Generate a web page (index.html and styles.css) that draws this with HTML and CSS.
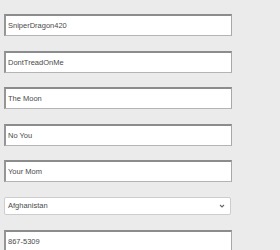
FILE: index.html
```html
<!DOCTYPE html>
<html>
<head>
<meta charset="utf-8">
<link rel="stylesheet" href="styles.css">
</head>
<body>
<form class="form">
  <input class="field" type="text" value="SniperDragon420">
  <input class="field" type="text" value="DontTreadOnMe">
  <input class="field" type="text" value="The Moon">
  <input class="field" type="text" value="No You">
  <input class="field" type="text" value="Your Mom">
  <div class="select">
    <span class="select-text">Afghanistan</span>
    <svg class="chev" width="6" height="4" viewBox="0 0 6 4"><path d="M1 1 L3 3 L5 1" fill="none" stroke="#666" stroke-width="1.1"/></svg>
  </div>
  <input class="field" type="text" value="867-5309">
</form>
</body>
</html>
```
FILE: styles.css
```css
html, body {
  margin: 0;
  padding: 0;
  background: #ebebeb;
  height: 100%;
  overflow: hidden;
}
.form {
  display: flex;
  flex-direction: column;
  gap: 14.5px;
  padding: 14px 0 0 4px;
  width: 228px;
}
.field {
  box-sizing: border-box;
  width: 228px;
  height: 22px;
  margin: 0;
  padding: 0 0 0 2px;
  background: #fff;
  border-style: solid;
  border-width: 2px 1.5px 1.5px 2px;
  border-color: #8c8c8c #a8a8a8 #b4b4b4 #969696;
  font-family: "Liberation Sans", Arial, sans-serif;
  font-size: 7.5px;
  color: #4a4a4a;
  outline: none;
}
.select {
  box-sizing: border-box;
  width: 227px;
  height: 18.5px;
  background: #fff;
  border: 1px solid #cdcdcd;
  border-radius: 2px;
  display: flex;
  align-items: center;
  justify-content: space-between;
  padding: 0 5px 0 3px;
  font-family: "Liberation Sans", Arial, sans-serif;
  font-size: 7.5px;
  color: #4a4a4a;
}
.chev {
  display: block;
}
```
